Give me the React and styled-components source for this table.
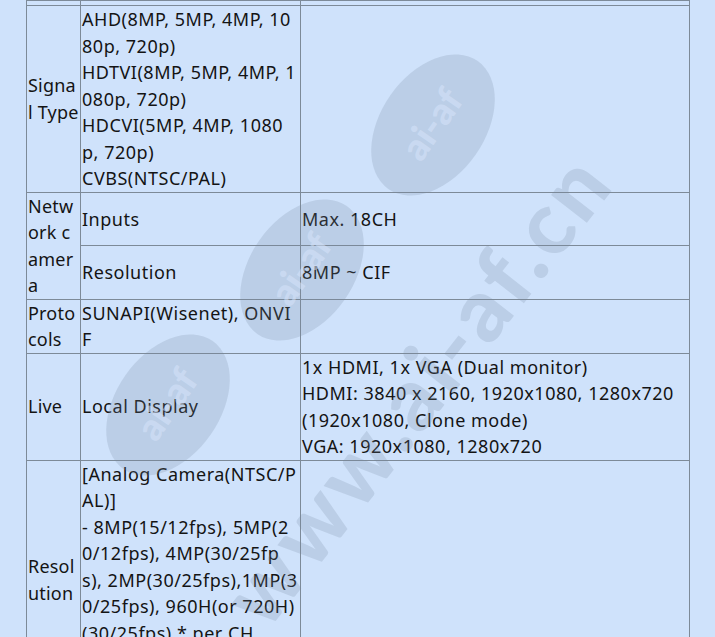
import React from 'react';
import styled, { createGlobalStyle } from 'styled-components';

const Global = createGlobalStyle`
  html, body {
    margin: 0;
    padding: 0;
    background: #cfe2fb;
    overflow: hidden;
  }
  body {
    font-family: "Noto Sans", "Open Sans", sans-serif;
    color: #141414;
  }
`;

const Page = styled.div`
  position: relative;
  width: 715px;
  height: 637px;
  padding-left: 26px;
  box-sizing: border-box;
  overflow: hidden;
`;

const Table = styled.table`
  border-collapse: collapse;
  table-layout: fixed;
  width: 664px;
  font-size: 18px;
  line-height: 26.5px;
`;

const Cell = styled.td`
  border: 1px solid #7d8a98;
  padding: 0 1px;
  vertical-align: middle;
  word-break: break-all;
  letter-spacing: ${(p) => (p.$head ? '0.2px' : '0.52px')};
  height: ${(p) => (p.$stub ? '4px' : 'auto')};
`;

const Line = styled.div``;

const Watermark = styled.svg`
  position: absolute;
  left: 0;
  top: 0;
  pointer-events: none;
`;

const markFill = 'rgba(120,135,160,0.22)';

const Oval = ({ x, y }) => (
  <g transform={`translate(${x} ${y}) rotate(35)`}>
    <ellipse cx="0" cy="0" rx="52" ry="78" fill={markFill} />
    <text
      x="0"
      y="12"
      transform="rotate(-90)"
      textAnchor="middle"
      fontFamily="Lato, sans-serif"
      fontWeight="900"
      fontSize="38"
      fill="rgba(215,228,250,0.55)"
    >
      ai-af
    </text>
  </g>
);

export default function App() {
  return (
    <>
      <Global />
      <Page>
        <Table>
          <colgroup>
            <col style={{ width: 54 }} />
            <col style={{ width: 220 }} />
            <col />
          </colgroup>
          <tbody>
            <tr>
              <Cell $stub />
              <Cell $stub />
              <Cell $stub />
            </tr>
            <tr>
              <Cell $head>Signal Type</Cell>
              <Cell>
                <Line>AHD(8MP, 5MP, 4MP, 1080p, 720p)</Line>
                <Line>HDTVI(8MP, 5MP, 4MP, 1080p, 720p)</Line>
                <Line>HDCVI(5MP, 4MP, 1080p, 720p)</Line>
                <Line>CVBS(NTSC/PAL)</Line>
              </Cell>
              <Cell />
            </tr>
            <tr>
              <Cell $head rowSpan={2}>Network camera</Cell>
              <Cell>Inputs</Cell>
              <Cell>Max. 18CH</Cell>
            </tr>
            <tr>
              <Cell>Resolution</Cell>
              <Cell>8MP ~ CIF</Cell>
            </tr>
            <tr>
              <Cell $head>Protocols</Cell>
              <Cell>SUNAPI(Wisenet), ONVIF</Cell>
              <Cell />
            </tr>
            <tr>
              <Cell $head>Live</Cell>
              <Cell>Local Display</Cell>
              <Cell>
                <Line>1x HDMI, 1x VGA (Dual monitor)</Line>
                <Line>HDMI: 3840 x 2160, 1920x1080, 1280x720</Line>
                <Line>(1920x1080, Clone mode)</Line>
                <Line>VGA: 1920x1080, 1280x720</Line>
              </Cell>
            </tr>
            <tr>
              <Cell $head>Resolution</Cell>
              <Cell>
                <Line>[Analog Camera(NTSC/PAL)]</Line>
                <Line>
                  - 8MP(15/12fps), 5MP(20/12fps), 4MP(30/25fps), 2MP(30/25fps),1MP(30/25fps), 960H(or 720H)(30/25fps) * per CH
                </Line>
                <Line>[IP Camera]</Line>
                <Line>- Max. 8MP</Line>
              </Cell>
              <Cell />
            </tr>
          </tbody>
        </Table>
        <Watermark width="715" height="637" viewBox="0 0 715 637">
          <Oval x={433} y={125} />
          <Oval x={302} y={270} />
          <Oval x={168} y={405} />
          <text
            transform="translate(418 390) rotate(-52)"
            y="30"
            textAnchor="middle"
            fontFamily="Lato, sans-serif"
            fontWeight="900"
            fontSize="88"
            letterSpacing="4"
            fill={markFill}
          >
            www.ai-af.cn
          </text>
        </Watermark>
      </Page>
    </>
  );
}
